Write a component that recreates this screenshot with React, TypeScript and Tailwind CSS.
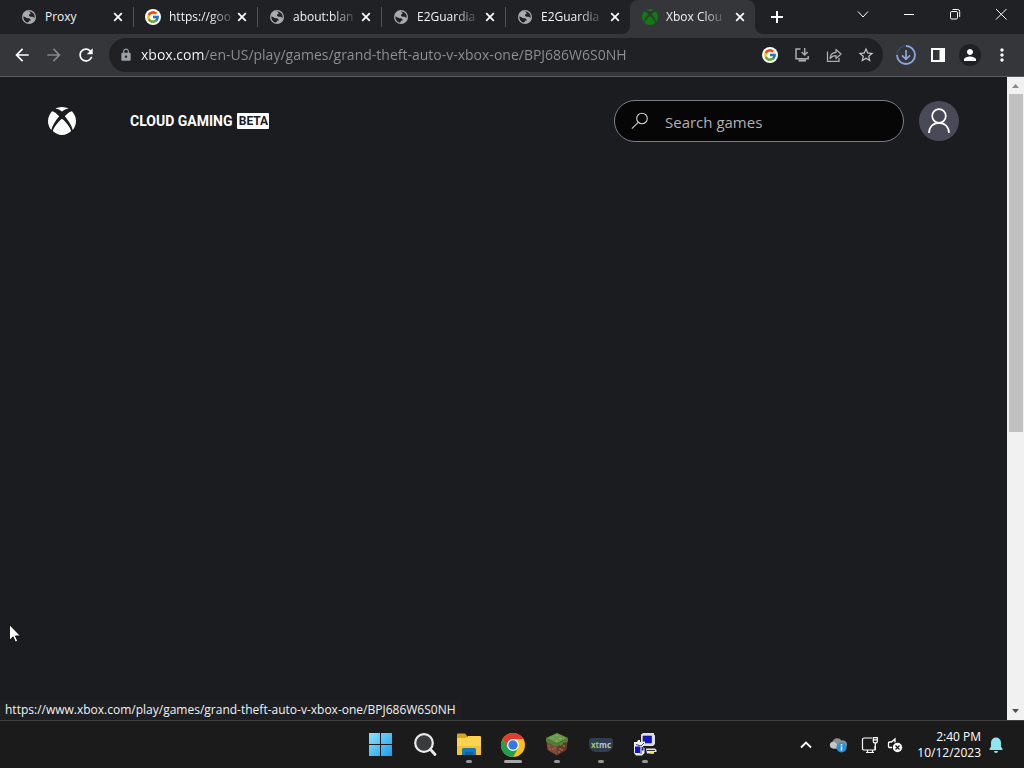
import React from "react";
import type { ReactNode } from "react";
import { FcGoogle } from "react-icons/fc";
import { MdArrowBack, MdArrowForward, MdLock, MdMoreVert, MdPerson, MdRefresh, MdStarBorder } from "react-icons/md";

const FONT = "font-['Segoe_UI','Open_Sans','Noto_Sans',sans-serif]";

function GoogleBadge() {
  return (
    <span className="flex size-4 items-center justify-center rounded-full bg-white">
      <FcGoogle className="size-3.5" />
    </span>
  );
}

function GlobeIcon() {
  return (
    <svg viewBox="0 0 16 16" className="size-4">
      <circle cx="8" cy="8" r="7" fill="#a8abae" />
      <path
        fill="#202124"
        d="M7.500 2.500l1.200-.1c2 .2 3.600 1.300 4.400 3 .6 1.100.7 2.400.4 3.600l-1.700-1.200H9.500L8 6.800V5.600l1.500-.6V3.800zM2.400 7.200l3.800 2h2l1.300 1.300v1.300H8.200l-1 1.800C4.300 13.300 2.100 10.600 2.400 7.200z"
      />
    </svg>
  );
}

function XboxIcon({ className }: { className: string }) {
  return (
    <svg viewBox="0 0 28 28" className={className}>
      <path
        fill="currentColor"
        d="M7.100 1.900C9.200.7 11.500 0 14 0s4.800.7 6.900 1.900C18.600 1.600 16 3.200 14 4.500 12 3.200 9.400 1.600 7.100 1.900z
           M4 4.300C2 6.600 0 9.800 0 14c0 3.700 1.400 6.700 3.300 9C4.300 18.500 7.700 13.300 11.200 9.300 8.800 6.800 6 4.400 4 4.300z
           M24 4.300c2 2.300 4 5.500 4 9.700 0 3.700-1.400 6.700-3.300 9-1-4.500-4.400-9.700-7.900-13.700 2.400-2.500 5.200-4.900 7.200-5z
           M14 11.700c4.200 3.400 8.200 8.500 9.200 12.400C20.900 26.500 17.700 28 14 28s-6.900-1.500-9.200-3.900C5.800 20.200 9.800 15.100 14 11.700z"
      />
    </svg>
  );
}

type TabInfo = { title: string; icon: ReactNode; active?: boolean; last?: boolean };

const tabs: TabInfo[] = [
  { title: "Proxy", icon: <GlobeIcon /> },
  { title: "https://goo", icon: <GoogleBadge /> },
  { title: "about:blan", icon: <GlobeIcon /> },
  { title: "E2Guardia", icon: <GlobeIcon /> },
  { title: "E2Guardia", icon: <GlobeIcon />, last: true },
  { title: "Xbox Clou", icon: <XboxIcon className="size-4 text-[#107c10]" />, active: true },
];

function CloseGlyph() {
  return (
    <svg viewBox="0 0 16 16" className="size-4" fill="none" stroke="#fff" strokeWidth="1.700">
      <path d="M4.200 4.200l7.600 7.600M11.800 4.200l-7.600 7.600" />
    </svg>
  );
}

function Tab({ title, icon, active, last }: TabInfo) {
  return (
    <div
      className={
        active
          ? "relative flex w-[125px] items-center rounded-t-lg bg-[#35363a] pl-3"
          : "relative flex w-[124px] items-center pl-[11px]"
      }
    >
      {active && (
        <>
          <svg viewBox="0 0 8 8" className="absolute bottom-0 -left-2 size-2" fill="#35363a">
            <path d="M8 0v8H0a8 8 0 0 0 8-8z" />
          </svg>
          <svg viewBox="0 0 8 8" className="absolute -right-2 bottom-0 size-2" fill="#35363a">
            <path d="M0 0v8h8a8 8 0 0 1-8-8z" />
          </svg>
        </>
      )}
      <button className="flex min-w-0 flex-1 items-center gap-2 text-left">
        <span className="shrink-0">{icon}</span>
        <span
          className={
            title === "Proxy"
              ? "text-xs whitespace-nowrap text-[#f1f3f4]"
              : "text-xs whitespace-nowrap text-[#f1f3f4] [mask-image:linear-gradient(to_right,#000_65%,#0003)]"
          }
        >
          {title}
        </span>
      </button>
      <button aria-label={"Close " + title} className="mr-[7px] shrink-0">
        <CloseGlyph />
      </button>
      {!active && !last && <span className="h-5 w-px bg-[#4f5256]" />}
    </div>
  );
}

function WindowButton({ label, children }: { label: string; children: ReactNode }) {
  return (
    <button aria-label={label} className="flex h-7 w-[46px] items-center justify-center">
      <svg viewBox="0 0 12 12" className="size-3 overflow-visible" fill="none" stroke="#fff" strokeWidth="1">
        {children}
      </svg>
    </button>
  );
}

function TabStrip() {
  return (
    <div className="flex h-[34px] shrink-0 bg-[#202124] pl-2.5">
      {tabs.map((t, i) => (
        <Tab key={i} {...t} />
      ))}
      <button aria-label="New tab" className="ml-[13px] flex w-[18px] items-center justify-center">
        <svg viewBox="0 0 12 12" className="size-3" stroke="#fff" strokeWidth="2">
          <path d="M6 0v12M0 6h12" />
        </svg>
      </button>
      <div className="ml-auto flex">
        <WindowButton label="Search tabs">
          <path d="M1 3.500l5 5.500 5-5.500" />
        </WindowButton>
        <WindowButton label="Minimize">
          <path d="M1 6.500h10" />
        </WindowButton>
        <WindowButton label="Restore">
          <rect x="1.500" y="3.500" width="7" height="7.500" rx="1.300" />
          <path d="M3.500 1.500h5.200a2 2 0 0 1 2 2V9" />
        </WindowButton>
        <WindowButton label="Close window">
          <path d="M1 1l10.500 10.500M11.500 1L1 11.500" />
        </WindowButton>
      </div>
    </div>
  );
}

function ToolButton({ label, children }: { label: string; children: ReactNode }) {
  return (
    <button aria-label={label} className="flex size-8 shrink-0 items-center justify-center">
      {children}
    </button>
  );
}

function Toolbar() {
  return (
    <div className="flex h-[43px] shrink-0 items-center border-b border-[#5b5c60] bg-[#35363a] px-1.5">
      <ToolButton label="Back">
        <MdArrowBack className="size-5 text-white" />
      </ToolButton>
      <ToolButton label="Forward">
        <MdArrowForward className="size-5 text-[#85878a]" />
      </ToolButton>
      <ToolButton label="Reload">
        <MdRefresh className="size-5 text-white" />
      </ToolButton>
      <div className="mx-[7px] flex h-[34px] min-w-0 flex-1 items-center rounded-full bg-[#202124] pr-px pl-2.5">
        <MdLock className="size-3.5 shrink-0 text-[#9aa0a6]" />
        <input
          aria-label="Address"
          readOnly
          value="xbox.com/en-US/play/games/grand-theft-auto-v-xbox-one/BPJ686W6S0NH"
          className="ml-2 min-w-0 flex-1 bg-[linear-gradient(to_right,#ffffff_63px,#8f9296_63px)] bg-clip-text text-sm text-transparent outline-none"
        />
        <ToolButton label="Search with Google">
          <GoogleBadge />
        </ToolButton>
        <ToolButton label="Install app">
          <svg viewBox="0 0 16 16" className="size-4" fill="none" stroke="#a9acb0" strokeWidth="1.500">
            <path d="M6.500 2H2v9.800h12.200V9" />
            <path d="M4.500 13.500h7.500" strokeWidth="2.200" />
            <path d="M10.700 1v6.800M7.700 5l3 3 3-3" />
          </svg>
        </ToolButton>
        <ToolButton label="Share">
          <svg viewBox="0 0 16 16" className="size-4" fill="none" stroke="#a9acb0" strokeWidth="1.300">
            <path d="M1.500 4.500v9.800h11.500V11" />
            <path d="M4 11.500c.3-4 2.500-6 6-6V2.500l5 4.600-5 4.400V8.700c-2.700 0-4.500.7-6 2.800z" strokeLinejoin="round" />
          </svg>
        </ToolButton>
        <ToolButton label="Bookmark">
          <MdStarBorder className="size-[18px] text-[#c4c7ca]" />
        </ToolButton>
      </div>
      <ToolButton label="Downloads">
        <svg viewBox="0 0 20 20" className="size-5" fill="none">
          <circle cx="10" cy="10" r="9" stroke="#3d4762" strokeWidth="1.600" />
          <path d="M10 1a9 9 0 1 1-9 9" stroke="#8ba5dc" strokeWidth="1.800" />
          <path d="M10 5v9M6 10.300l4 4 4-4" stroke="#8ba5dc" strokeWidth="1.700" />
        </svg>
      </ToolButton>
      <ToolButton label="Side panel">
        <svg viewBox="0 0 14 14" className="size-3.5">
          <path fill="#fff" fillRule="evenodd" d="M0 0h14v14H0zM2 2v10h6.500V2z" />
        </svg>
      </ToolButton>
      <ToolButton label="Profile">
        <span className="flex size-[22px] items-center justify-center rounded-full bg-[#202124]">
          <MdPerson className="size-[18px] text-white" />
        </span>
      </ToolButton>
      <ToolButton label="Menu">
        <MdMoreVert className="size-5 text-white" />
      </ToolButton>
    </div>
  );
}

function XboxHeader() {
  return (
    <header className="flex h-[88px] items-center px-12">
      <a href="#home" aria-label="Xbox">
        <XboxIcon className="size-7 text-white" />
      </a>
      <a href="#cloud" className="ml-[54px] flex items-center font-['Roboto',sans-serif] font-bold">
        <span className="text-sm whitespace-nowrap text-white">CLOUD GAMING</span>
        <span className="ml-[5px] flex h-4 w-8 items-center justify-center rounded-[1px] bg-white text-xs text-[#1b1c20]">
          BETA
        </span>
      </a>
      <label className="ml-auto flex h-[42px] w-[290px] items-center rounded-full border border-[#7d7e80] bg-[#060607] px-4">
        <svg viewBox="0 0 18 18" className="size-[18px] shrink-0" fill="none" stroke="#cfcfcf" strokeWidth="1.100">
          <circle cx="11" cy="6.500" r="5.300" />
          <path d="M7.200 10.300L.8 16.700" />
        </svg>
        <input
          type="search"
          aria-label="Search games"
          placeholder="Search games"
          className="ml-4 min-w-0 flex-1 bg-transparent pt-0.5 text-[15px] text-white outline-none placeholder:text-[#b1b1b2]"
        />
      </label>
      <button aria-label="Account" className="ml-[15px] flex size-10 items-center justify-center rounded-full bg-[#484b57]">
        <svg viewBox="0 0 24 26" className="h-[26px] w-6" fill="none" stroke="#fff" strokeWidth="1.700">
          <circle cx="12" cy="8" r="6.800" />
          <path d="M2 25c0-5.800 4-10.200 10-10.200S22 19.200 22 25" />
        </svg>
      </button>
    </header>
  );
}

function Scrollbar() {
  return (
    <div className="flex w-[17px] shrink-0 flex-col items-center bg-[#f1f1f1]">
      <svg viewBox="0 0 17 17" className="h-[17px] w-[17px] shrink-0">
        <path fill="#8b8b8b" d="M5 11l3.500-4 3.500 4z" />
      </svg>
      <div className="min-h-0 w-full flex-1 pr-px pl-0.5">
        <div className="h-[55.5%] bg-[#c1c1c1]" />
      </div>
      <svg viewBox="0 0 17 17" className="h-[17px] w-[17px] shrink-0">
        <path fill="#505050" d="M5 6l3.500 4L12 6z" />
      </svg>
    </div>
  );
}

function WindowsIcon() {
  return (
    <svg viewBox="0 0 24 24" className="size-6">
      <defs>
        <linearGradient id="win" x1="0" y1="0" x2="1" y2="1">
          <stop offset="0" stopColor="#8be4fb" />
          <stop offset="1" stopColor="#1a9cf0" />
        </linearGradient>
      </defs>
      <path fill="url(#win)" d="M0 0h11v11H0zM12 0h11v11H12zM0 12h11v11H0zM12 12h11v11H12z" />
    </svg>
  );
}

function SearchIcon() {
  return (
    <svg viewBox="0 0 24 24" className="size-6" fill="none">
      <circle cx="11" cy="10" r="8.800" fill="#3a3b3d" stroke="#ececec" strokeWidth="2.200" />
      <path d="M17.500 16.500l4.500 5" stroke="#ececec" strokeWidth="2.800" strokeLinecap="round" />
    </svg>
  );
}

function FolderIcon() {
  return (
    <svg viewBox="0 0 26 24" className="h-6 w-[26px]">
      <path fill="#d9a520" d="M1 1.500a1 1 0 0 1 1-1h7l2 2.500V8H1z" />
      <path fill="#fbd34f" d="M1 5h9l2-2h12a1 1 0 0 1 1 1v17a1 1 0 0 1-1 1H2a1 1 0 0 1-1-1z" />
      <path fill="#f5c237" d="M1 13h24v8a1 1 0 0 1-1 1H2a1 1 0 0 1-1-1z" />
      <path fill="#1479b8" d="M6 22v-5.500A1.500 1.500 0 0 1 7.500 15h11a1.500 1.500 0 0 1 1.500 1.500V22z" />
      <path fill="#0f639a" d="M9 19h8v3H9z" />
    </svg>
  );
}

function ChromeIcon() {
  return (
    <svg viewBox="0 0 24 24" className="size-6">
      <circle cx="12" cy="12" r="12" fill="#fbc116" />
      <path fill="#e33b2e" d="M1.600 6A12 12 0 0 1 22.400 6H12l-5.200 9z" />
      <path fill="#229f4b" d="M1.600 6A12 12 0 0 0 12 24l5.200-9H6.800z" />
      <circle cx="12" cy="12" r="6" fill="#fff" />
      <circle cx="12" cy="12" r="4.700" fill="#3278e8" />
    </svg>
  );
}

function BlockIcon() {
  return (
    <svg viewBox="0 0 24 24" className="size-6">
      <path fill="#69994a" d="M12 0l11 5-11 5.500L1 5z" />
      <path fill="#7b4a38" d="M1 5l11 5.500V22.500L2.500 17z" />
      <path fill="#643a2c" d="M23 5l-11 5.500V22.500l9.500-5.500z" />
      <path fill="#4f8036" d="M1 5l11 5.500v3l-2-1v1l-3-1.500V11l-3-1v1L1 8zM23 5l-11 5.500v3l3-1.500v1l3-1.500V10l3-1v1l2-2z" />
      <path fill="#a3553f" d="M3 12h2v2H3zM7 15h2v2H7zM9 14h2v2H9zM14 15h2v2h-2zM18 12h2v2h-2zM4 15h2v2H4zM16 18h2v-2h-2zM13 20h2v-2h-2z" />
      <path fill="#86b465" d="M11 2h2v1h-2zM6 4.500h3v1H6zM14 5h3v1h-3zM10 7.500h3v1h-3z" />
    </svg>
  );
}

function XtmcIcon() {
  return (
    <span className="flex h-3.5 w-6 items-center justify-center rounded-t-[3px] rounded-b-[7px] bg-[#2f3e50] text-[8px] leading-3 font-bold">
      <span className="text-[#a3c46c]">xt</span>
      <span className="text-[#b9c5cb]">mc</span>
    </span>
  );
}

function PuttyIcon() {
  return (
    <svg viewBox="0 0 24 24" className="size-6">
      <path fill="#dedede" d="M8 1.500L10 0h11v1.500l1 1V11l-2 2H8z" />
      <path fill="#1212cf" stroke="#222" strokeWidth=".6" d="M10 3h8.500v7H10z" />
      <path fill="#e6e6e6" d="M13 15.500h9l1.500 1.500v2H21v1.500h-7z" />
      <path fill="#333" d="M14 17h8v1h-8z" />
      <path fill="#f0ed60" d="M17 19h4v1.500h-4z" />
      <path fill="#f1f1f1" d="M1 9h3l1-2h2v2l5-.5v2.500l-2 1.500V14l1.500 1v5L9 22.500H3L1 20z" />
      <path fill="#1212cf" d="M2 13.500h5V20H2zM9 14h1.500v3.500H9z" />
      <path stroke="#111" strokeWidth=".8" fill="none" d="M3 11.500l5 1.500 3-3M8 14v7" />
    </svg>
  );
}

const apps: { name: string; icon: ReactNode; mark?: "open" | "focus" }[] = [
  { name: "Start", icon: <WindowsIcon /> },
  { name: "Search", icon: <SearchIcon /> },
  { name: "File Explorer", icon: <FolderIcon />, mark: "open" },
  { name: "Google Chrome", icon: <ChromeIcon />, mark: "focus" },
  { name: "Minecraft", icon: <BlockIcon />, mark: "open" },
  { name: "Media", icon: <XtmcIcon />, mark: "open" },
  { name: "PuTTY", icon: <PuttyIcon />, mark: "open" },
];

function Taskbar() {
  return (
    <footer className="grid h-12 shrink-0 grid-cols-[1fr_auto_1fr] border-t border-[#414141] bg-[#1b1b1b]">
      <div />
      <div className="flex pl-0.5">
        {apps.map((a) => (
          <button key={a.name} aria-label={a.name} className="relative flex w-11 items-center justify-center">
            {a.icon}
            {a.mark === "open" && <span className="absolute bottom-[5px] h-[3px] w-1.5 rounded-full bg-[#969696]" />}
            {a.mark === "focus" && <span className="absolute bottom-[5px] h-[3px] w-[18px] rounded-full bg-[#a8a8a8]" />}
          </button>
        ))}
      </div>
      <div className="flex items-center justify-end pr-[21px]">
        <button aria-label="Hidden icons" className="mr-4">
          <svg viewBox="0 0 14 14" className="size-3.5" fill="none" stroke="#fff" strokeWidth="1.800">
            <path d="M2 9.500l5-5 5 5" />
          </svg>
        </button>
        <button aria-label="OneDrive" className="mr-3.5">
          <svg viewBox="0 0 18 16" className="h-4 w-[18px]">
            <path fill="#8d9092" d="M4 11.500A3.500 3.500 0 0 1 3.500 5a5 5 0 0 1 9-1.500A4 4 0 0 1 15 11.500z" />
            <path fill="#c3c5c7" d="M4 11.500a3.400 3.400 0 0 1-.5-6.700c3-.3 4.500 2.500 7.500 6.700z" />
            <circle cx="12.500" cy="10.500" r="5" fill="#2791d9" />
            <path stroke="#fff" strokeWidth="1.500" d="M12.500 9.500v4M12.500 7v1.500" />
          </svg>
        </button>
        <button aria-label="Network" className="mr-2">
          <svg viewBox="0 0 18 18" className="size-[18px]" fill="none" stroke="#fff" strokeWidth="1.200">
            <path d="M11 2H3a1.500 1.500 0 0 0-1.500 1.500v9A1.500 1.500 0 0 0 3 14h11v-4M5 16.500h8M6.500 14v2.500M11.500 14v2.500" />
            <path d="M12.300 1.600h4v4a1.300 1.300 0 0 1-1.300 1.300h-1.400a1.300 1.300 0 0 1-1.300-1.300zM12.300 3.800h4M14.300 7v7" />
          </svg>
        </button>
        <button aria-label="Muted" className="mr-3.5">
          <svg viewBox="0 0 16 16" className="size-4" fill="none" stroke="#fff">
            <path d="M8 5.500V2L4.500 5H2.500A1 1 0 0 0 1.500 6v3.500a1 1 0 0 0 1 1H5" strokeWidth="1.300" />
            <circle cx="10.500" cy="10.500" r="4.700" fill="#fff" stroke="none" />
            <path d="M8.500 8.500l4 4M12.500 8.500l-4 4" stroke="#1b1b1b" strokeWidth="1.300" />
          </svg>
        </button>
        <div className="text-right text-xs whitespace-nowrap text-white">
          <div>2:40 PM</div>
          <div>10/12/2023</div>
        </div>
        <button aria-label="Notifications" className="ml-2">
          <svg viewBox="0 0 14 16" className="h-4 w-3.5" fill="#8fe6ee">
            <path d="M7 .5A5 5 0 0 0 2 5.500v4L.5 12v1h13v-1L12 9.500v-4a5 5 0 0 0-5-5zM5 14h4a2 2 0 0 1-4 0z" />
          </svg>
        </button>
      </div>
    </footer>
  );
}

export default function App() {
  return (
    <div className={"flex h-screen flex-col overflow-hidden bg-[#1b1c20] " + FONT}>
      <TabStrip />
      <Toolbar />
      <div className="relative flex min-h-0 flex-1">
        <main className="min-w-0 flex-1">
          <XboxHeader />
        </main>
        <Scrollbar />
        <div className="absolute bottom-0 left-0 flex h-5 items-center bg-[#1e1f22] px-[5px] text-xs whitespace-nowrap text-[#f1f3f4]">
          https://www.xbox.com/play/games/grand-theft-auto-v-xbox-one/BPJ686W6S0NH
        </div>
        <svg viewBox="0 0 12 19" className="absolute bottom-[77px] left-[9px] h-[19px] w-3" fill="#fff" stroke="#000" strokeWidth=".8">
          <path d="M.5.7v15.500l3.600-3.400 2.300 5.300 2.300-1-2.300-5.200h5z" />
        </svg>
      </div>
      <Taskbar />
    </div>
  );
}
